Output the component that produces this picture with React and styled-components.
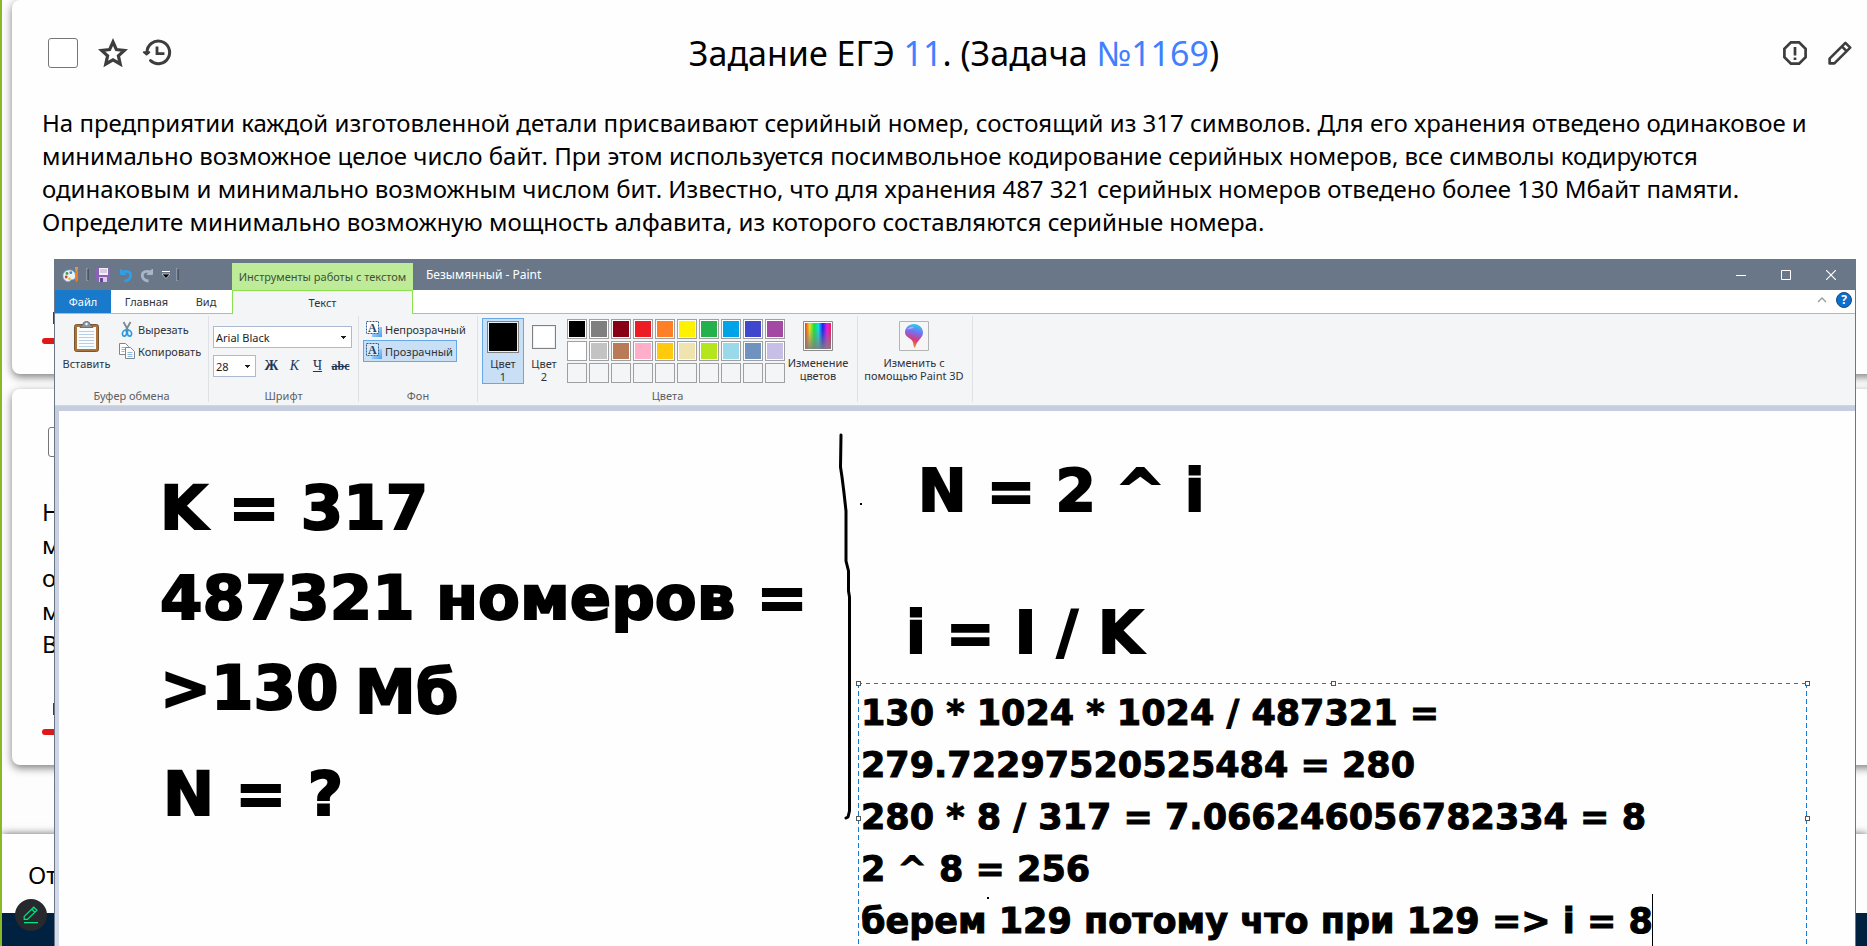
import React from 'react';
import styled, { createGlobalStyle } from 'styled-components';

const UI_FONT = "'Noto Sans', 'Open Sans', sans-serif";
const CANVAS_FONT = "'Arial Black', 'DejaVu Sans', sans-serif";

const Global = createGlobalStyle`
  *, *::before, *::after { box-sizing: border-box; }
  body { margin: 0; background: #fdfdfd; color: #000; font-family: ${UI_FONT}; overflow: hidden; }
  button, select, textarea, input { font: inherit; color: inherit; margin: 0; }
  button { background: none; border: 0; padding: 0; }
  svg { display: block; flex: none; }
`;

/* ---------- task page ---------- */

const Page = styled.div`
  position: relative;
  min-height: 100vh;
  display: flex;
  flex-direction: column;
  overflow: hidden;
  border-left: 2px solid #8ab928;
`;

const Card = styled.article`
  margin: 0 -29px 15px 10px;
  padding: 31px 36px 30px 30px;
  border-radius: 8px;
  background: #fefefe;
  box-shadow: 0 3px 8px rgba(0, 0, 0, 0.5);
`;

const CardHeader = styled.header`
  display: grid;
  grid-template-columns: 1fr auto 1fr;
  align-items: center;
  height: 44px;
  padding-left: 6px;
`;

const Tools = styled.div`
  display: flex;
  align-items: center;
  gap: ${(p) => (p.$end ? '21px' : '0')};
  justify-content: ${(p) => (p.$end ? 'flex-end' : 'flex-start')};
  padding-right: ${(p) => (p.$end ? '8px' : '0')};
`;

const Check = styled.input`
  appearance: none;
  width: 30px;
  height: 30px;
  border: 1px solid #767676;
  border-radius: 3px;
  background: #fff;
`;

const IconButton = styled.button`
  display: flex;
  margin-left: ${(p) => p.$gap || 0}px;
  color: #3d3d3d;
`;

const Title = styled.h1`
  margin: 0;
  font-size: 34px;
  font-weight: 400;
  line-height: 44px;
`;

const TitleLink = styled.a`
  color: #3f80ff;
  text-decoration: none;
`;

const Statement = styled.p`
  margin: 31px 0 0;
  padding-right: 24px;
  font-size: 24px;
  line-height: 33px;
  white-space: pre-line;
`;

const AnswerTab = styled.div`
  display: flex;
  flex-direction: column;
  gap: 14px;
  margin-top: ${(p) => p.$top}px;
`;

const TabMark = styled.span`
  width: 12px;
  height: 12px;
  margin-left: 11px;
  border: 2px solid #3d3d3d;
`;

const TabLine = styled.span`
  width: 120px;
  height: 6px;
  border-radius: 3px;
  background: #e01717;
`;

const AnswerBar = styled.section`
  margin-top: 54px;
  height: 79px;
  padding: 21px 26px 0;
  font-size: 24px;
  line-height: 40px;
  background: #fefefe;
  box-shadow: 0 0 8px rgba(0, 0, 0, 0.6);
`;

const Footer = styled.footer`
  position: relative;
  flex: 1;
  min-height: 33px;
  background: #00213f;
`;

const EditBubble = styled.button`
  position: absolute;
  left: 13px;
  top: -14px;
  width: 32px;
  height: 32px;
  display: flex;
  align-items: center;
  justify-content: center;
  border-radius: 50%;
  background: #26292d;
`;

const StarIcon = () => (
  <svg width="30" height="30" viewBox="0 0 30 30" fill="none" stroke="currentColor" strokeWidth="3.2">
    <path d="M15 4L18.4 11.6L26.4 12.4L20.4 17.8L22.2 26L15 21.8L7.8 26L9.6 17.8L3.6 12.4L11.6 11.6Z" />
  </svg>
);

const HistoryIcon = () => (
  <svg width="30" height="30" viewBox="0 0 30 30" fill="none" stroke="currentColor" strokeWidth="3">
    <path d="M5 14.5A11.3 11.3 0 1 1 8.6 22.6" strokeLinecap="round" />
    <path d="M1.9 14.2h5.4L4.6 16.6z" fill="currentColor" strokeWidth="2" strokeLinejoin="round" />
    <path d="M15 8.6v7h7.4" strokeWidth="2.8" />
  </svg>
);

const ReportIcon = () => (
  <svg width="24" height="24" viewBox="0 0 24 24" fill="none" stroke="currentColor" strokeWidth="2.7">
    <path d="M7.9 1.4h8.2l6.5 6.5v8.2l-6.5 6.5H7.9l-6.5-6.5V7.9z" />
    <path d="M12 6v8.4M12 16.4v2.6" />
  </svg>
);

const PencilIcon = () => (
  <svg width="24" height="24" viewBox="0 0 24 24" fill="none" stroke="currentColor" strokeWidth="2.6">
    <path d="M1.6 22.4v-4.8L17.4 1.8l4.8 4.8L6.4 22.4z" strokeLinejoin="round" />
    <path d="M13.8 5.4l4.8 4.8" />
  </svg>
);

const BubblePencil = () => (
  <svg width="16" height="18" viewBox="0 0 16 18" fill="none" stroke="#00e583" strokeWidth="1.2">
    <path d="M1.2 13.4v-3L10.8 1.2l3.2 3L4.4 13.4zM8.8 3.2l3.2 3M1 16.6h14" />
  </svg>
);

/* ---------- Paint window ---------- */

const PaintWindow = styled.section`
  position: absolute;
  top: 259px;
  right: 11px;
  bottom: 0;
  left: 52px;
  display: flex;
  flex-direction: column;
  border: 1px solid #697789;
  border-width: 0 1px;
  background: #fefefe;
  font-size: 11px;
  color: #2f3338;
`;

const TitleBar = styled.header`
  display: flex;
  height: 31px;
  flex: none;
  padding-right: 2px;
  background: #697789;
`;

const QuickAccess = styled.div`
  width: 177px;
  padding-left: 7px;
  display: flex;
  align-items: center;
  gap: 6px;
`;

const Bar = styled.span`
  width: 3px;
  height: 13px;
  border: 1px solid #8b96a4;
  border-right-color: #4d5763;
  background: #5d6978;
`;

const ToolTab = styled.div`
  width: 181px;
  margin-top: 4px;
  line-height: 28px;
  text-align: center;
  white-space: nowrap;
  background: #beeb98;
  color: #41513a;
`;

const WindowTitle = styled.h2`
  flex: 1;
  margin: 0;
  padding-left: 13px;
  font-size: 12px;
  font-weight: 400;
  line-height: 31px;
  color: #fff;
`;

const WindowButton = styled.button`
  width: 45px;
  display: flex;
  align-items: center;
  justify-content: center;
`;

const TabRow = styled.nav`
  display: flex;
  align-items: stretch;
  height: 24px;
  flex: none;
  background: #fff;
  box-shadow: inset 0 -1px 0 #8be04e;
`;

const Tab = styled.button`
  width: ${(p) => p.$w}px;
  padding-bottom: 1px;
  color: ${(p) => (p.$file ? '#fff' : 'inherit')};
  background: ${(p) => (p.$file ? '#1979ca' : p.$active ? '#f4f5f7' : 'none')};
  border: solid #8be04e;
  border-width: ${(p) => (p.$active ? '1px 1px 0' : '0')};
  margin-bottom: ${(p) => (p.$active ? '0' : '1px')};
`;

const RowEnd = styled.div`
  flex: 1;
  display: flex;
  justify-content: flex-end;
  align-items: center;
  gap: 9px;
  padding: 0 3px 4px 0;
`;

const HelpButton = styled.button`
  width: 16px;
  height: 16px;
  border: 1px solid #17497c;
  border-radius: 50%;
  background: #0b6fd0;
  color: #fff;
  font-weight: 700;
  font-size: 12px;
  line-height: 14px;
`;

const Ribbon = styled.div`
  display: flex;
  flex: none;
  height: 92px;
  padding: 2px 0 3px;
  background: #f4f5f7;
  border-bottom: 1px solid #d3d7dd;
`;

const Group = styled.section`
  display: flex;
  flex-direction: column;
  justify-content: space-between;
  width: ${(p) => p.$w}px;
  border-right: 1px solid #dfe1e5;
`;

const GroupBody = styled.div`
  display: flex;
  padding: 2px 0 0 ${(p) => p.$left}px;
`;

const GroupLabel = styled.h3`
  margin: 0;
  font-size: 11px;
  font-weight: 400;
  line-height: 13px;
  text-align: center;
  color: #5d6064;
`;

const BigButton = styled.button`
  display: flex;
  flex-direction: column;
  align-items: center;
  gap: 5px;
  width: ${(p) => p.$w}px;
  padding-top: 3px;
  line-height: 13px;
  white-space: nowrap;
`;

const Stack = styled.div`
  display: flex;
  flex-direction: column;
  align-items: flex-start;
`;

const SmallButton = styled.button`
  display: flex;
  align-items: center;
  gap: 3px;
  height: 22px;
  padding: 0 3px 0 2px;
  border: 1px solid ${(p) => (p.$on ? '#66a7e8' : 'transparent')};
  background: ${(p) => (p.$on ? '#c9dff5' : 'none')};
  white-space: nowrap;
`;

const FontControls = styled.div`
  display: flex;
  flex-direction: column;
  gap: 7px;
  padding-top: 8px;
`;

const FontRow = styled.div`
  display: flex;
  align-items: center;
`;

const SelectBox = styled.select`
  appearance: none;
  width: ${(p) => p.$w}px;
  height: 22px;
  margin-right: 4px;
  padding: 0 2px;
  border: 1px solid #abbad0;
  border-radius: 0;
  color: #1c1c1c;
  background:
    linear-gradient(#1c1c1c, #1c1c1c) right 5px top 9px / 5px 1px no-repeat,
    linear-gradient(#1c1c1c, #1c1c1c) right 6px top 10px / 3px 1px no-repeat,
    linear-gradient(#1c1c1c, #1c1c1c) right 7px top 11px / 1px 1px no-repeat,
    #fff;
`;

const StyleButton = styled.button`
  width: 23px;
  height: 22px;
  font-family: 'Liberation Serif', serif;
  font-size: ${(p) => (p.$small ? 12 : 14)}px;
  font-weight: ${(p) => (p.$bold ? 700 : 400)};
  font-style: ${(p) => (p.$italic ? 'italic' : 'normal')};
  text-decoration: ${(p) => p.$line || 'none'};
  color: #1f3554;
`;

const ColorButton = styled.button`
  display: flex;
  flex-direction: column;
  justify-content: space-between;
  align-items: center;
  width: ${(p) => (p.$on ? 42 : 40)}px;
  height: 66px;
  padding: ${(p) => (p.$on ? '2px' : '6px')} 0 0;
  line-height: 13px;
  border: 1px solid ${(p) => (p.$on ? '#66a7e8' : 'transparent')};
  background: ${(p) => (p.$on ? '#c9dff5' : 'none')};
`;

const Swatch = styled.span`
  width: ${(p) => p.$size}px;
  height: ${(p) => p.$size}px;
  border: 1px solid #808080;
  background: ${(p) => p.$color};
  box-shadow: inset 0 0 0 1px #e8f0f8;
`;

const Palette = styled.div`
  display: grid;
  grid-template-columns: repeat(10, 20px);
  grid-auto-rows: 20px;
  gap: 2px;
  padding: 1px 0 0 3px;
`;

const PaletteCell = styled.button`
  border: 1px solid #a0a0a0;
  background: ${(p) => p.$color || '#f4f5f7'};
  box-shadow: ${(p) => (p.$color ? 'inset 0 0 0 1px #fff' : 'none')};
`;

const Workspace = styled.div`
  flex: 1;
  display: flex;
  min-height: 0;
  padding: 5px 0 0 4px;
  background: linear-gradient(#c5cddf, #d3daea);
`;

const Canvas = styled.div`
  position: relative;
  flex: 1;
  overflow: hidden;
  background: #fefefe;
  color: #000;
`;

const Drawing = styled.svg`
  position: absolute;
  top: 0;
  left: 0;
  pointer-events: none;
`;

const CanvasText = styled.div`
  position: absolute;
  left: ${(p) => p.$x}px;
  top: ${(p) => p.$y}px;
  font: 700 ${(p) => p.$size || 61}px/90px ${CANVAS_FONT};
  -webkit-text-stroke: 2px #000;
  white-space: pre;
`;

const TextFrame = styled.div`
  position: absolute;
  left: 799px;
  right: 48px;
  top: 272px;
  bottom: -7px;
  background:
    repeating-linear-gradient(90deg, #1979ca 0 4px, transparent 4px 8px) top / 100% 1px no-repeat,
    repeating-linear-gradient(#1979ca 0 5px, transparent 5px 8px) left / 1px 100% no-repeat,
    repeating-linear-gradient(#1979ca 0 5px, transparent 5px 8px) right / 1px 100% no-repeat;
`;

const TextArea = styled.textarea`
  display: block;
  width: 100%;
  height: 100%;
  padding: 4px 0 0 3px;
  border: 0;
  outline: 0;
  resize: none;
  overflow: hidden;
  background: none;
  white-space: pre;
  font: 700 35px/52px ${CANVAS_FONT};
  -webkit-text-stroke: 1px #000;
`;

const Caret = styled.span`
  position: absolute;
  left: 794px;
  top: 211px;
  width: 1px;
  height: 52px;
  background: #000;
`;

const Handle = styled.span`
  position: absolute;
  left: ${(p) => p.$left};
  top: ${(p) => p.$top};
  width: 5px;
  height: 5px;
  margin: -2px;
  border: 1px solid #555;
  background: #fff;
`;

const PaletteAppIcon = () => (
  <svg width="18" height="18" viewBox="0 0 18 18">
    <path d="M7.5 4C3.5 4 1 6.8 1 10s2.4 5.6 5.6 5.6c1.6 0 1.4-1.4 2.6-1.8 1.6-.5 4.3.2 4.3-3.8C13.5 6.4 11 4 7.5 4z" fill="#e9f2f8" stroke="#7fb1cf" strokeWidth=".8" />
    <circle cx="5" cy="7.5" r="1.4" fill="#4a9c3a" />
    <circle cx="8.8" cy="6.7" r="1.4" fill="#3b8bd0" />
    <circle cx="4.2" cy="11" r="1.4" fill="#d9402a" />
    <circle cx="7.5" cy="12.8" r="1.3" fill="#f0b429" />
    <path d="M12.8 1h3.4l-.8 4h-1.8z" fill="#d99a55" />
    <path d="M13.2 5h2.8v9l-1.4 2.5L13.2 14z" fill="#ee7d1e" />
  </svg>
);

const SaveIcon = () => (
  <svg width="14" height="14" viewBox="0 0 14 14">
    <path d="M0 0h14v14H2l-2-2z" fill="#8a63b5" />
    <path d="M3 0h9v7H3z" fill="#f3eff7" />
    <path d="M4 2h7M4 4h7" stroke="#b9a7cd" />
    <path d="M3 9h8v5H3z" fill="#d9cde6" />
    <path d="M4 10h3v4H4z" fill="#6b4696" />
  </svg>
);

const UndoIcon = ({ redo }) => (
  <svg width="14" height="16" viewBox="0 0 14 16" fill="none" stroke={redo ? '#a9b6c6' : '#2e9fe6'}>
    <g transform={redo ? 'matrix(-1 0 0 1 14 0)' : undefined}>
      <path d="M3 5.2C8 3.2 12 5 11.7 8.800 11.500 11.500 9 13.500 5.500 14" strokeWidth="2.800" />
      <path d="M1.500 2v5.500H7z" fill={redo ? '#a9b6c6' : '#2e9fe6'} strokeWidth="1" />
    </g>
  </svg>
);

const ClipboardIcon = () => (
  <svg width="25" height="31" viewBox="0 0 25 31">
    <rect x=".5" y="3.5" width="24" height="27" rx="2" fill="#a9743c" stroke="#7d5630" />
    <path d="M3 6h19v22H3z" fill="#fbfcfd" />
    <path d="M5 10.5h15M5 13.5h15M5 16.5h15M5 19.5h15M5 22.5h15M5 25.5h15" stroke="#b7cfe2" />
    <path d="M6 6.5L9 3c.5-3.5 6.5-3.5 7 0l3 3.5z" fill="#8d9299" stroke="#55585c" strokeWidth=".8" />
    <circle cx="12.5" cy="3" r="1.2" fill="#fff" />
  </svg>
);

const ScissorsIcon = () => (
  <svg width="16" height="16" viewBox="0 0 16 16" fill="none">
    <path d="M4.500 1l5 9M11.500 1l-5 9" stroke="#7c8793" strokeWidth="1.800" />
    <path d="M7.500 9.500c-2.500-1-4.500 1.500-4 4s3.500 2 4-.5zM8.500 9.500c2.500-1 4.500 1.500 4 4s-3.500 2-4-.5z" stroke="#2f97dd" strokeWidth="1.600" />
  </svg>
);

const CopyIcon = () => (
  <svg width="16" height="16" viewBox="0 0 16 16" fill="#fff" stroke="#7c8793">
    <path d="M.5.5h6l3 3v8h-9z" />
    <path d="M2.500 4.500h4M2.500 6.500h4M2.500 8.500h3" stroke="#8fb8d8" />
    <path d="M6.500 4.500h5l4 4v7h-9z" />
    <path d="M8.500 9.500h5M8.500 11.500h5M8.500 13.500h5" stroke="#8fb8d8" />
  </svg>
);

const LetterIcon = ({ clear }) => (
  <svg width="16" height="16" viewBox="0 0 16 16">
    <defs>
      <linearGradient id="paper" x1="0" y1="0" x2="1" y2="1">
        <stop offset="0" stopColor="#cfe6fc" />
        <stop offset="1" stopColor="#4a9df0" />
      </linearGradient>
    </defs>
    <path d="M6 6h10v10H6z" fill="url(#paper)" />
    <path d="M.5.5h12v12H.5z" fill={clear ? '#d6e8fa' : '#fff'} stroke="#2b5f92" strokeDasharray="2 1" />
    <text x="2" y="11" fontFamily="Liberation Serif" fontWeight="700" fontSize="12" fill="#1f4468">A</text>
  </svg>
);

const SpectrumIcon = () => (
  <svg width="30" height="30" viewBox="0 0 30 30">
    <defs>
      <linearGradient id="hue">
        <stop offset="0" stopColor="#f3322a" />
        <stop offset=".18" stopColor="#e8e020" />
        <stop offset=".35" stopColor="#18e03a" />
        <stop offset=".52" stopColor="#12d9e8" />
        <stop offset=".68" stopColor="#1a22f0" />
        <stop offset=".85" stopColor="#e81ae0" />
        <stop offset="1" stopColor="#f01a50" />
      </linearGradient>
      <linearGradient id="fade" x2="0" y2="1">
        <stop offset=".2" stopColor="#808080" stopOpacity="0" />
        <stop offset="1" stopColor="#808080" stopOpacity=".9" />
      </linearGradient>
    </defs>
    <path d="M.5.5h29v29H.5z" fill="#fff" stroke="#8c8c8c" />
    <path d="M2 2h26v26H2z" fill="url(#hue)" />
    <path d="M2 2h26v26H2z" fill="url(#fade)" />
  </svg>
);

const Paint3DIcon = () => (
  <svg width="30" height="30" viewBox="0 0 30 30">
    <defs>
      <linearGradient id="drop" x1=".6" y1="0" x2=".4" y2="1">
        <stop offset="0" stopColor="#20d0f0" />
        <stop offset=".35" stopColor="#7a6cf0" />
        <stop offset=".65" stopColor="#d83c78" />
        <stop offset="1" stopColor="#f5a020" />
      </linearGradient>
    </defs>
    <path d="M.5.5h29v29H.5z" fill="#f6f6f6" stroke="#b4b4b4" />
    <path d="M15 3c5 0 9 4 9 8.5 0 6-6 7-8 15.5-2.5-2-1-5-3-7.500S6 15.500 6 11.500C6 7 10 3 15 3z" fill="url(#drop)" />
    <path d="M8 9c1-3 5-4.500 7-3-2 3-5 1-7 3z" fill="#b7a4ff" />
  </svg>
);

const COLORS = [
  '#000000', '#7f7f7f', '#880015', '#ed1c24', '#ff7f27', '#fff200', '#22b14c', '#00a2e8', '#3f48cc', '#a349a4',
  '#ffffff', '#c3c3c3', '#b97a57', '#ffaec9', '#ffc90e', '#efe4b0', '#b5e61d', '#99d9ea', '#7092be', '#c8bfe7',
  null, null, null, null, null, null, null, null, null, null,
];

const CALCULATION = [
  '130 * 1024 * 1024 / 487321 =',
  '279.72297520525484 = 280',
  '280 * 8 / 317 = 7.066246056782334 = 8',
  '2 ^ 8 = 256',
  'берем 129 потому что при 129 => i = 8',
].join('\n');

const NOTES = [
  { x: 101, y: 52, text: 'K = 317' },
  { x: 101, y: 142, text: '487321 номеров =' },
  { x: 101, y: 232, text: '>130' },
  { x: 296, y: 236, text: 'Мб' },
  { x: 104, y: 338, text: 'N = ?' },
  { x: 859, y: 35, text: 'N = 2 ^ i', size: 58 },
  { x: 847, y: 177, text: 'i = I / K', size: 58 },
];

const HANDLES = [['0px', '0px'], ['50%', '0px'], ['100%', '0px'], ['0px', '50%'], ['100%', '50%']];

function Paint() {
  return (
    <PaintWindow aria-label="Paint">
      <TitleBar>
        <QuickAccess>
          <PaletteAppIcon />
          <Bar />
          <IconButton $gap={1} aria-label="Сохранить"><SaveIcon /></IconButton>
          <IconButton $gap={3} aria-label="Отменить"><UndoIcon /></IconButton>
          <IconButton $gap={1} aria-label="Вернуть"><UndoIcon redo /></IconButton>
          <IconButton $gap={2} aria-label="Настройка панели">
            <svg width="8" height="8" viewBox="0 0 8 8">
              <path d="M0 .5h8" stroke="#fff" />
              <path d="M0 3h8L4 7.500z" fill="#000" stroke="#fff" strokeWidth=".6" />
            </svg>
          </IconButton>
          <Bar />
        </QuickAccess>
        <ToolTab>Инструменты работы с текстом</ToolTab>
        <WindowTitle>Безымянный - Paint</WindowTitle>
        <WindowButton aria-label="Свернуть">
          <svg width="10" height="10"><path d="M0 5.500h10" stroke="#fff" /></svg>
        </WindowButton>
        <WindowButton aria-label="Развернуть">
          <svg width="10" height="10"><path d="M.5.5h9v9h-9z" fill="none" stroke="#fff" /></svg>
        </WindowButton>
        <WindowButton aria-label="Закрыть">
          <svg width="10" height="10"><path d="M0 0l10 10M10 0L0 10" stroke="#fff" strokeWidth="1.200" /></svg>
        </WindowButton>
      </TitleBar>
      <TabRow>
        <Tab $w={56} $file>Файл</Tab>
        <Tab $w={71}>Главная</Tab>
        <Tab $w={48}>Вид</Tab>
        <Tab as="span" $w={2} />
        <Tab $w={181} $active>Текст</Tab>
        <RowEnd>
          <IconButton aria-label="Свернуть ленту">
            <svg width="10" height="6"><path d="M1 5l4-4 4 4" fill="none" stroke="#9a9a9a" strokeWidth="1.300" /></svg>
          </IconButton>
          <HelpButton>?</HelpButton>
        </RowEnd>
      </TabRow>
      <Ribbon>
        <Group $w={154}>
          <GroupBody $left={2}>
            <BigButton $w={59}><ClipboardIcon />Вставить</BigButton>
            <Stack>
              <SmallButton><ScissorsIcon />Вырезать</SmallButton>
              <SmallButton><CopyIcon />Копировать</SmallButton>
            </Stack>
          </GroupBody>
          <GroupLabel>Буфер обмена</GroupLabel>
        </Group>
        <Group $w={150}>
          <GroupBody $left={4}>
            <FontControls>
              <FontRow>
                <SelectBox $w={139} aria-label="Шрифт" defaultValue="Arial Black"><option>Arial Black</option></SelectBox>
              </FontRow>
              <FontRow>
                <SelectBox $w={43} aria-label="Размер шрифта" defaultValue="28"><option>28</option></SelectBox>
                <StyleButton $bold>Ж</StyleButton>
                <StyleButton $italic>К</StyleButton>
                <StyleButton $line="underline">Ч</StyleButton>
                <StyleButton $small $bold $line="line-through">abc</StyleButton>
              </FontRow>
            </FontControls>
          </GroupBody>
          <GroupLabel>Шрифт</GroupLabel>
        </Group>
        <Group $w={119}>
          <GroupBody $left={4}>
            <Stack>
              <SmallButton><LetterIcon />Непрозрачный</SmallButton>
              <SmallButton $on><LetterIcon clear />Прозрачный</SmallButton>
            </Stack>
          </GroupBody>
          <GroupLabel>Фон</GroupLabel>
        </Group>
        <Group $w={380}>
          <GroupBody $left={4}>
            <ColorButton $on>
              <Swatch $size={32} $color="#000" />
              <span>Цвет<br />1</span>
            </ColorButton>
            <ColorButton>
              <Swatch $size={24} $color="#fff" />
              <span>Цвет<br />2</span>
            </ColorButton>
            <Palette>
              {COLORS.map((color, i) => (
                <PaletteCell key={i} $color={color} aria-label={color || 'Пустой цвет'} />
              ))}
            </Palette>
            <BigButton $w={66}>
              <SpectrumIcon />
              <span>Изменение<br />цветов</span>
            </BigButton>
          </GroupBody>
          <GroupLabel>Цвета</GroupLabel>
        </Group>
        <Group $w={115}>
          <GroupBody $left={0}>
            <BigButton $w={112}>
              <Paint3DIcon />
              <span>Изменить с<br />помощью Paint 3D</span>
            </BigButton>
          </GroupBody>
        </Group>
      </Ribbon>
      <Workspace>
        <Canvas>
          {NOTES.map((note) => (
            <CanvasText key={note.text} $x={note.x} $y={note.y} $size={note.size}>{note.text}</CanvasText>
          ))}
          <TextFrame>
            <TextArea aria-label="Текст" spellCheck={false} defaultValue={CALCULATION} />
            <Caret />
            {HANDLES.map(([left, top]) => <Handle key={left + top} $left={left} $top={top} />)}
          </TextFrame>
          <Drawing width="1000" height="530">
            <path
              d="M782 24L781.500 56L783 66L785 82L787 100L787 150L789.500 160L789.500 180L790.500 186L790.500 400L789 406L787 407"
              fill="none" stroke="#000" strokeWidth="3" strokeLinejoin="round" strokeLinecap="round"
            />
            <path d="M801 92h2v2h-2zM928 486h2v2h-2z" />
          </Drawing>
        </Canvas>
      </Workspace>
    </PaintWindow>
  );
}

export default function App() {
  return (
    <>
      <Global />
      <Page>
        <Card>
          <CardHeader>
            <Tools>
              <Check type="checkbox" aria-label="Выбрать задачу" />
              <IconButton $gap={20} aria-label="В избранное"><StarIcon /></IconButton>
              <IconButton $gap={14} aria-label="История"><HistoryIcon /></IconButton>
            </Tools>
            <Title>
              Задание ЕГЭ <TitleLink href="#11">11</TitleLink>. (Задача <TitleLink href="#1169">№1169</TitleLink>)
            </Title>
            <Tools $end>
              <IconButton aria-label="Сообщить об ошибке"><ReportIcon /></IconButton>
              <IconButton aria-label="Редактировать"><PencilIcon /></IconButton>
            </Tools>
          </CardHeader>
          <Statement>
            На предприятии каждой изготовленной детали присваивают серийный номер, состоящий из 317 символов. Для его хранения отведено одинаковое и минимально возможное целое число байт. При этом используется посимвольное кодирование серийных номеров, все символы кодируются одинаковым и минимально возможным числом бит. Известно, что для хранения 487 321 серийных номеров отведено более 130 Мбайт памяти. Определите минимально возможную мощность алфавита, из которого составляются серийные номера.
          </Statement>
          <AnswerTab $top={74}><TabMark /><TabLine /></AnswerTab>
        </Card>
        <Card>
          <CardHeader>
            <Tools>
              <Check type="checkbox" aria-label="Выбрать следующую задачу" />
            </Tools>
          </CardHeader>
          <Statement>{'Н\nм\nо\nм\nВ'}</Statement>
          <AnswerTab $top={43}><TabMark /><TabLine /></AnswerTab>
        </Card>
        <AnswerBar>От</AnswerBar>
        <Footer>
          <EditBubble aria-label="Рисовать"><BubblePencil /></EditBubble>
        </Footer>
        <Paint />
      </Page>
    </>
  );
}
